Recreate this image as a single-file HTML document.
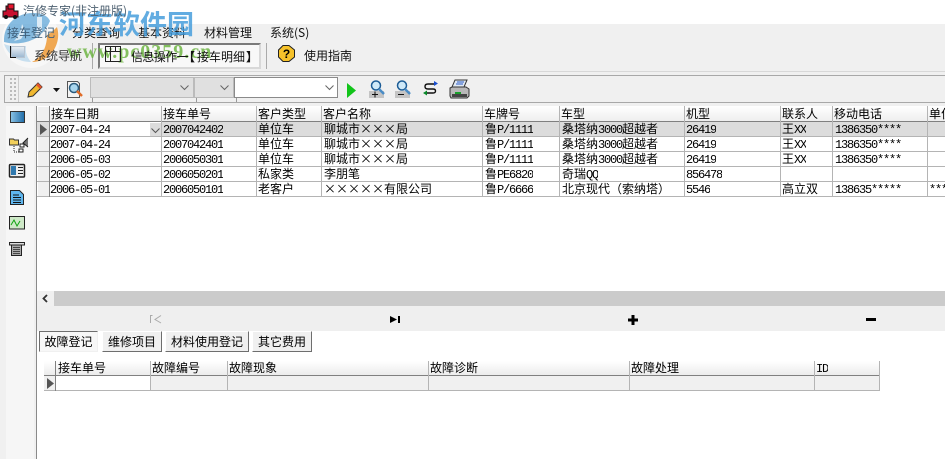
<!DOCTYPE html>
<html><head><meta charset="utf-8"><style>
*{margin:0;padding:0;box-sizing:border-box}
html,body{width:945px;height:459px;overflow:hidden;background:#f0f0f0}
body{position:relative;font:12px/14px "WenQuanYi Zen Hei","Noto Sans CJK SC",sans-serif;color:#000}
.a{position:absolute}
.t{position:absolute;white-space:nowrap}
.u{font-family:"Noto Sans CJK SC","Liberation Sans",sans-serif;line-height:16px;color:#111}
.z{z-index:2}
i{font:12px/14px "Liberation Mono",monospace;letter-spacing:-1.2px}
.c{position:absolute;white-space:nowrap;overflow:hidden;height:14px;padding-left:1px}
.v{position:absolute;width:1px;background:#b4b4b4}
.h{position:absolute;height:1px;background:#b4b4b4}
.tab{position:absolute;top:331px;height:21px;background:#f0f0f0;border:1px solid;border-color:#fff #6e6e6e #6e6e6e #fff;text-align:center;line-height:19px}
svg{position:absolute;overflow:visible}
</style></head><body>
<div class="a" style="left:0;top:0;width:945px;height:24px;background:#fff"></div>
<div class="t u z" style="left:23px;top:3px;color:#4f6272">汽修专家(非注册版)</div>
<svg class="z" style="left:2px;top:3px" width="18" height="16"><path d="M4 3h8v5h4v6H1V8h3z" fill="#c8102e" stroke="#111"/><rect x="6" y="1" width="6" height="5" fill="#e8152e" stroke="#111"/><circle cx="4" cy="14" r="2" fill="#111"/><circle cx="13" cy="14" r="2" fill="#111"/></svg>

<div class="t u z" style="left:7px;top:25px;color:#3f5f7a">接车登记</div>
<div class="t u" style="left:72px;top:25px">分类查询</div>
<div class="t u" style="left:138px;top:25px">基本资料</div>
<div class="t u" style="left:204px;top:25px">材料管理</div>
<div class="t u" style="left:270px;top:25px">系统(S)</div>

<div class="a z" style="left:11px;top:46px;width:14px;height:12px;background:linear-gradient(#e8eef4,#9db9d2);border:1px solid #b8c4d0"></div>
<div class="a z" style="left:10px;top:46px;width:1px;height:12px;background:#111"></div>
<div class="a z" style="left:10px;top:57px;width:6px;height:1px;background:#111"></div>
<div class="t u z" style="left:34px;top:48px;color:#333">系统导航</div>
<div class="v" style="left:92px;top:43px;height:26px;background:#aaa"></div>
<div class="a" style="left:98px;top:43px;width:163px;height:26px;background:#f8f8f8;border:2px solid;border-color:#7a7a7a #d8d8d8 #d8d8d8 #7a7a7a"></div>
<svg class="z" style="left:105px;top:46px" width="17" height="16"><path d="M.5.5h15v15H.5zM5.500.5v15M10.500.5v5M.5 5.500h15" fill="none" stroke="#222"/></svg>
<div class="t u z" style="left:131px;top:49px;letter-spacing:-.6px">信息操作一</div>
<div class="t u z" style="left:183px;top:49px;font-weight:700">【</div>
<div class="t u z" style="left:197px;top:49px">接车明细</div>
<div class="t u z" style="left:246px;top:49px;font-weight:700">】</div>
<div class="v" style="left:266px;top:43px;height:26px;background:#aaa"></div>
<svg style="left:278px;top:45px" width="17" height="17"><path d="M5 .5h6L16.500 5v7L11 16.500H5L.5 12V5z" fill="#f6c22a" stroke="#222"/><text x="8.500" y="13" text-anchor="middle" font-size="12" font-weight="bold" font-family="Liberation Sans">?</text></svg>
<div class="t u" style="left:304px;top:48px">使用指南</div>

<div class="a" style="left:0;top:71px;width:945px;height:1px;background:#d8d8d8"></div>
<div class="a" style="left:4px;top:75px;width:941px;height:28px;border:1px solid #a8a8a8;border-right:0;background:#f0f0f0"></div>
<div class="a" style="left:10px;top:78px;width:6px;height:22px;border-left:2px dotted #bbb;border-right:2px dotted #bbb"></div>
<div class="v" style="left:18px;top:76px;height:26px;background:#ccc"></div>
<svg style="left:27px;top:82px" width="16" height="16"><path d="M1 15l1-5L11 1l4 4-9 9z" fill="#f0b830" stroke="#333"/><path d="M11 1l4 4-2 2-4-4z" fill="#e4562a"/></svg>
<svg style="left:53px;top:88px" width="7" height="4"><path d="M0 0h7L3.500 4z" fill="#111"/></svg>
<svg style="left:67px;top:81px" width="16" height="18"><path d="M.5.500h10l2 2v14H.5z" fill="#f4f4f4" stroke="#555"/><circle cx="7" cy="7" r="4.500" fill="#a9d6ee" stroke="#2b5c7e" stroke-width="1.500"/><path d="M10 10l5 5" stroke="#e06c28" stroke-width="2.500"/></svg>
<div class="a" style="left:90px;top:77px;width:104px;height:21px;background:#e0e0e0;border:1px solid #bbb"></div>
<div class="a" style="left:194px;top:77px;width:40px;height:21px;background:#e0e0e0;border:1px solid #bbb"></div>
<div class="a" style="left:234px;top:77px;width:104px;height:21px;background:#fff;border:1px solid #8a8a8a"></div>
<svg style="left:0;top:0" width="945" height="110" fill="none" stroke="#666"><path d="M180.500 85.500l4 4 4-4M220.500 85.500l4 4 4-4M325.500 85.500l4 4 4-4"/><path d="M92.500 98v4M196.500 98v4M236.500 98v4" stroke="#999"/></svg>
<svg style="left:347px;top:83px" width="9" height="15"><path d="M0 0l9 7.500L0 15z" fill="#12c41a"/></svg>
<svg style="left:369px;top:80px" width="17" height="17"><rect x="0" y="11" width="15" height="7" fill="#c4c4c4"/><path d="M3 14.500h6M6 11.500v6" stroke="#111"/><circle cx="7" cy="5.500" r="4.500" fill="#cfe9f8" stroke="#1c5c96" stroke-width="1.500"/><path d="M10 9l5 5" stroke="#4a8cc6" stroke-width="2.500"/></svg>
<svg style="left:395px;top:80px" width="17" height="17"><rect x="0" y="11" width="15" height="7" fill="#c4c4c4"/><path d="M3 14.500h6" stroke="#111"/><circle cx="7" cy="5.500" r="4.500" fill="#cfe9f8" stroke="#1c5c96" stroke-width="1.500"/><path d="M10 9l5 5" stroke="#4a8cc6" stroke-width="2.500"/></svg>
<svg style="left:422px;top:80px" width="16" height="16" fill="none"><path d="M13 4H6Q3 4 3 6.500T6 9h5q2.500 0 2.500 2T11 13H5" stroke="#111" stroke-width="1.400"/><path d="M12 1l4 2.500-4 2.500z" fill="#1a4fd0"/><path d="M5 10.500L1 13l4 2.500z" fill="#0a8a2a"/></svg>
<svg style="left:449px;top:79px" width="21" height="20"><path d="M6 1h12l-3 7H3z" fill="#dfe8f2" stroke="#333"/><path d="M8 3h7M7 5h7" stroke="#2a5ac8"/><path d="M1 9l2-1h14l3 2v7l-2 2H2l-1-2z" fill="#b8b8b8" stroke="#333"/><rect x="3" y="15" width="15" height="3" fill="#444"/><rect x="6" y="13" width="6" height="2" fill="#18a02a"/></svg>

<div class="a" style="left:6px;top:106px;width:28px;height:353px;background:#f6f6f6"></div>
<div class="a" style="left:36px;top:106px;width:1px;height:353px;background:#8a8a8a"></div>
<svg style="left:10px;top:111px" width="16" height="14"><defs><linearGradient id="b" x1="0" x2="1"><stop offset="0" stop-color="#8cc4e6"/><stop offset="1" stop-color="#1f6ca8"/></linearGradient></defs><rect x=".5" y=".5" width="14" height="11" fill="url(#b)" stroke="#333"/></svg>
<svg style="left:9px;top:137px" width="21" height="18"><path d="M.5 2h4l1 1h4v5H.5z" fill="#f2cf5a" stroke="#333"/><path d="M19 1l-5 5 5 4" fill="#777" stroke="#222"/><rect x="11" y="7" width="4" height="3" fill="#fff" stroke="#222"/><rect x="10" y="12" width="4" height="3" fill="#fff" stroke="#222"/><path d="M5 9v6h5" stroke="#222" stroke-dasharray="1 1" fill="none"/></svg>
<svg style="left:9px;top:164px" width="16" height="14"><rect x=".5" y=".5" width="15" height="12.500" rx="1" fill="#eee" stroke="#222" stroke-width="1.500"/><rect x="2" y="2" width="5" height="9" fill="#2f78ae"/><path d="M9 3.500h5M9 6.500h5M9 9.500h5" stroke="#222"/></svg>
<svg style="left:10px;top:190px" width="14" height="15"><path d="M.5.500h9l4 4v10H.500z" fill="#5fb6ee" stroke="#222"/><path d="M3 5h6M3 7.500h8M3 10h8M3 12.500h8" stroke="#111"/></svg>
<svg style="left:9px;top:216px" width="16" height="14"><rect x=".5" y=".5" width="15" height="12.500" fill="#cfe9c8" stroke="#222"/><path d="M2 9l3-5 3 6 3-5" fill="none" stroke="#0fa30f"/></svg>
<svg style="left:9px;top:241px" width="16" height="15"><path d="M.5 1.500h15V4H.5z" fill="#ddd" stroke="#222"/><rect x="2.500" y="4" width="10" height="10.500" fill="#aaa" stroke="#222"/><path d="M4 6.500h7M4 8.500h7M4 10.500h7M4 12.500h7" stroke="#444"/></svg>

<div class="a" style="left:37px;top:106px;width:908px;height:185px;background:#fff"></div>
<div class="a" style="left:37px;top:106px;width:908px;height:15px;background:linear-gradient(#fff,#eee)"></div>
<div class="a" style="left:37px;top:121px;width:908px;height:1px;background:#808080"></div>
<div class="a" style="left:37px;top:122px;width:908px;height:14px;background:#dcdcdc"></div>
<div class="a" style="left:49px;top:122px;width:112px;height:14px;background:#fff"></div>
<div class="a" style="left:150px;top:123px;width:11px;height:13px;background:#dcdcdc"></div>
<svg style="left:150px;top:123px" width="11" height="13"><path d="M1.500 5.500l4 4 4-4" fill="none" stroke="#555"/></svg>
<div class="a" style="left:38px;top:137px;width:11px;height:59px;background:#f0f0f0"></div>
<div class="a" style="left:38px;top:107px;width:11px;height:14px;background:#f0f0f0"></div>
<svg style="left:40px;top:124px" width="7" height="11"><path d="M0 0l7 5.500L0 11z" fill="#555"/></svg>
<div class="h" style="left:37px;top:136px;width:908px"></div><div class="h" style="left:37px;top:151px;width:908px"></div><div class="h" style="left:37px;top:166px;width:908px"></div><div class="h" style="left:37px;top:181px;width:908px"></div><div class="h" style="left:37px;top:196px;width:908px"></div>
<div class="v" style="left:49px;top:106px;height:91px;background:#808080"></div>
<div class="v" style="left:161px;top:106px;height:91px"></div><div class="v" style="left:256px;top:106px;height:91px"></div><div class="v" style="left:321px;top:106px;height:91px"></div><div class="v" style="left:482px;top:106px;height:91px"></div><div class="v" style="left:559px;top:106px;height:91px"></div><div class="v" style="left:684px;top:106px;height:91px"></div><div class="v" style="left:780px;top:106px;height:91px"></div><div class="v" style="left:832px;top:106px;height:91px"></div><div class="v" style="left:927px;top:106px;height:91px"></div>

<div class="c" style="left:50px;top:107px">接车日期</div><div class="c" style="left:162px;top:107px">接车单号</div><div class="c" style="left:257px;top:107px">客户类型</div><div class="c" style="left:322px;top:107px">客户名称</div><div class="c" style="left:483px;top:107px">车牌号</div><div class="c" style="left:560px;top:107px">车型</div><div class="c" style="left:685px;top:107px">机型</div><div class="c" style="left:781px;top:107px">联系人</div><div class="c" style="left:833px;top:107px">移动电话</div><div class="c" style="left:928px;top:107px;width:17px">单位</div>

<div class="c" style="left:49px;top:122px"><i>2007-04-24</i></div><div class="c" style="left:162px;top:122px"><i>2007042402</i></div><div class="c" style="left:257px;top:122px">单位车</div><div class="c" style="left:323px;top:122px">聊城市×××局</div><div class="c" style="left:484px;top:122px">鲁<i>P/1111</i></div><div class="c" style="left:561px;top:122px">桑塔纳<i>3000</i>超越者</div><div class="c" style="left:685px;top:122px"><i>26419</i></div><div class="c" style="left:781px;top:122px">王<i>XX</i></div><div class="c" style="left:834px;top:122px"><i>1386350****</i></div>

<div class="c" style="left:49px;top:137px"><i>2007-04-24</i></div><div class="c" style="left:162px;top:137px"><i>2007042401</i></div><div class="c" style="left:257px;top:137px">单位车</div><div class="c" style="left:323px;top:137px">聊城市×××局</div><div class="c" style="left:484px;top:137px">鲁<i>P/1111</i></div><div class="c" style="left:561px;top:137px">桑塔纳<i>3000</i>超越者</div><div class="c" style="left:685px;top:137px"><i>26419</i></div><div class="c" style="left:781px;top:137px">王<i>XX</i></div><div class="c" style="left:834px;top:137px"><i>1386350****</i></div>

<div class="c" style="left:49px;top:152px"><i>2006-05-03</i></div><div class="c" style="left:162px;top:152px"><i>2006050301</i></div><div class="c" style="left:257px;top:152px">单位车</div><div class="c" style="left:323px;top:152px">聊城市×××局</div><div class="c" style="left:484px;top:152px">鲁<i>P/1111</i></div><div class="c" style="left:561px;top:152px">桑塔纳<i>3000</i>超越者</div><div class="c" style="left:685px;top:152px"><i>26419</i></div><div class="c" style="left:781px;top:152px">王<i>XX</i></div><div class="c" style="left:834px;top:152px"><i>1386350****</i></div>

<div class="c" style="left:49px;top:167px"><i>2006-05-02</i></div><div class="c" style="left:162px;top:167px"><i>2006050201</i></div><div class="c" style="left:257px;top:167px">私家类</div><div class="c" style="left:323px;top:167px">李朋笔</div><div class="c" style="left:484px;top:167px">鲁<i>PE6820</i></div><div class="c" style="left:561px;top:167px">奇瑞<i>QQ</i></div><div class="c" style="left:685px;top:167px"><i>856478</i></div>

<div class="c" style="left:49px;top:182px"><i>2006-05-01</i></div><div class="c" style="left:162px;top:182px"><i>2006050101</i></div><div class="c" style="left:257px;top:182px">老客户</div><div class="c" style="left:323px;top:182px">×××××有限公司</div><div class="c" style="left:484px;top:182px">鲁<i>P/6666</i></div><div class="c" style="left:561px;top:182px">北京现代（索纳塔）</div><div class="c" style="left:685px;top:182px"><i>5546</i></div><div class="c" style="left:781px;top:182px">高立双</div><div class="c" style="left:834px;top:182px"><i>138635*****</i></div><div class="c" style="left:928px;top:182px;width:17px"><i>****</i></div>

<div class="a" style="left:37px;top:291px;width:908px;height:15px;background:#cbcbcb"></div>
<div class="a" style="left:37px;top:291px;width:17px;height:15px;background:#f0f0f0"></div>
<svg style="left:42px;top:294px" width="7" height="9"><path d="M5 1L1.500 4.500 5 8" fill="none" stroke="#333" stroke-width="1.800"/></svg>
<div class="a" style="left:37px;top:306px;width:908px;height:25px;background:#efefef"></div>
<svg style="left:150px;top:315px" width="12" height="9" fill="none" stroke="#aaa"><path d="M.5 8V.5h2M11 .5L5 4.500l6 3.500"/></svg>
<svg style="left:390px;top:316px" width="11" height="7"><path d="M0 0l7 3.500L0 7z" fill="#000"/><rect x="8" y="0" width="2" height="7" fill="#000"/></svg>
<svg style="left:628px;top:315px" width="10" height="10"><path d="M3.500 0h3v3.500H10v3H6.500V10h-3V6.500H0v-3h3.500z" fill="#000"/></svg>
<svg style="left:866px;top:318px" width="11" height="3"><rect width="10" height="3" fill="#000"/></svg>

<div class="a" style="left:37px;top:331px;width:908px;height:128px;background:#fff"></div>
<div class="tab" style="left:39px;width:59px;background:#f7f7f7;border-color:#6e6e6e #f0f0f0 #f0f0f0 #6e6e6e">故障登记</div>
<div class="tab" style="left:102px;width:60px">维修项目</div>
<div class="tab" style="left:165px;width:84px">材料使用登记</div>
<div class="tab" style="left:252px;width:60px">其它费用</div>

<div class="a" style="left:44px;top:361px;width:836px;height:14px;background:linear-gradient(#fff,#ececec)"></div>
<div class="a" style="left:44px;top:375px;width:836px;height:1px;background:#808080"></div>
<div class="a" style="left:44px;top:376px;width:836px;height:14px;background:#f0f0f0"></div>
<div class="a" style="left:56px;top:376px;width:94px;height:14px;background:#fff"></div>
<div class="h" style="left:44px;top:390px;width:836px"></div>
<svg style="left:47px;top:378px" width="7" height="11"><path d="M0 0l7 5.500L0 11z" fill="#555"/></svg>
<div class="v" style="left:55px;top:361px;height:30px;background:#808080"></div><div class="v" style="left:150px;top:361px;height:30px"></div><div class="v" style="left:227px;top:361px;height:30px"></div><div class="v" style="left:428px;top:361px;height:30px"></div><div class="v" style="left:629px;top:361px;height:30px"></div><div class="v" style="left:814px;top:361px;height:30px"></div><div class="v" style="left:879px;top:361px;height:30px"></div>
<div class="c" style="left:57px;top:361px">接车单号</div><div class="c" style="left:151px;top:361px">故障编号</div><div class="c" style="left:228px;top:361px">故障现象</div><div class="c" style="left:429px;top:361px">故障诊断</div><div class="c" style="left:630px;top:361px">故障处理</div><div class="c" style="left:815px;top:361px"><i>ID</i></div>

<svg style="left:0;top:0;z-index:1" width="945" height="80">
<circle cx="31" cy="39" r="29" fill="#fff" fill-opacity=".45"/>
<path d="M4 42C3 24 17 13 33 13c9 0 15 3 17 8-3 7-8 13-14 17-9 5-20 7-32 4z" fill="#3d93cf" fill-opacity=".62"/>
<path d="M37 17h5v14c-2 3-5 5-9 6 2-2 4-5 4-8zM22 24c3 5 3 10-1 15l-7 2c5-5 7-11 8-17z" fill="#fff" fill-opacity=".7"/>
<path d="M4 44c8 3 15 3 22 2-1 6 1 11 5 16-13 0-23-7-27-18z" fill="#8cc0e4" fill-opacity=".45"/>
<path d="M57 27c5 16-6 35-25 35 9-4 15-14 15-27 4-2 7-5 10-8z" fill="#ef9a36" fill-opacity=".85"/>
<text x="59" y="34" font-family="Noto Sans CJK SC,sans-serif" font-size="27" font-weight="700" fill="#3f9adb" fill-opacity=".82">河东软件园</text>
<text x="67" y="58" font-family="Liberation Serif,serif" font-size="20" font-weight="700" fill="#6fb544" fill-opacity=".85" letter-spacing="1">www.pc0359.cn</text>
</svg>
</body></html>
